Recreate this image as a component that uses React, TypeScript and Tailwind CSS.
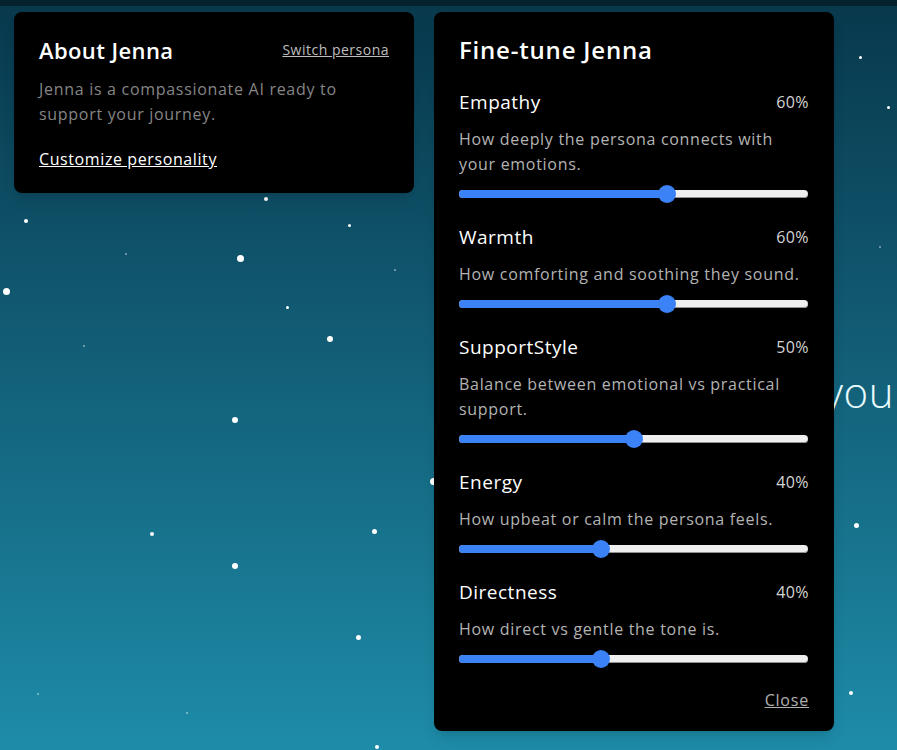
import React from "react";

type Trait = { name: string; value: number; desc: string };

const traits: Trait[] = [
  { name: "Empathy", value: 60, desc: "How deeply the persona connects with your emotions." },
  { name: "Warmth", value: 60, desc: "How comforting and soothing they sound." },
  { name: "SupportStyle", value: 50, desc: "Balance between emotional vs practical support." },
  { name: "Energy", value: 40, desc: "How upbeat or calm the persona feels." },
  { name: "Directness", value: 40, desc: "How direct vs gentle the tone is." },
];

// x, y, size
const stars: [number, number, number][] = [
  [266, 199, 4], [26, 221, 4], [349, 225, 3], [240, 258, 7], [6, 291, 7],
  [330, 339, 6], [235, 420, 6], [152, 534, 4], [374, 531, 5], [235, 566, 6],
  [358, 637, 5], [377, 747, 4], [860, 57, 3], [888, 107, 3], [856, 525, 5],
  [851, 693, 4], [433, 481, 7], [287, 307, 3], [126, 254, 2], [84, 346, 2],
  [395, 270, 2], [880, 247, 2], [38, 694, 2], [187, 713, 2],
];

const Slider = ({ value }: { value: number }) => {
  const pos = `calc(9px + (100% - 18px) * ${value / 100})`;
  return (
    <div className="relative h-[18px] w-full">
      <div className="absolute left-0 right-px top-[5px] h-[8px] rounded-full bg-[#efefef] shadow-[inset_0_-1px_0_#8f8f8f]" />
      <div className="absolute left-0 top-[5px] h-[8px] rounded-full bg-[#3b82f6]" style={{ width: pos }} />
      <div
        className="absolute top-0 h-[18px] w-[18px] -translate-x-1/2 rounded-full bg-[#3b82f6]"
        style={{ left: pos }}
      />
    </div>
  );
};

export default function App() {
  return (
    <div className="relative h-[750px] w-full overflow-hidden bg-gradient-to-b from-[#08384c] to-[#1e8ca9] font-['Open_Sans',sans-serif]">
      <div className="h-[6px] bg-[#05222f]" />

      {stars.map(([x, y, s], i) => (
        <span
          key={i}
          className="absolute rounded-full bg-white"
          style={{ left: x - s / 2, top: y - s / 2, width: s, height: s, opacity: s < 3 ? 0.5 : 1 }}
        />
      ))}

      <main className="flex h-[744px] items-center justify-end pr-[3px] pt-[28px]">
        <h1 className="text-[42px] font-light leading-none tracking-[0.5px] text-[#e8fbff]">here for you</h1>
      </main>

      {/* About card */}
      <section className="absolute left-[14px] top-[12px] w-[400px] rounded-lg bg-black px-[25px] pb-[22px] pt-[24px] shadow-lg">
        <div className="flex items-center justify-between">
          <h2 className="text-[22px] font-semibold leading-[28px] tracking-[0.4px] text-white">About Jenna</h2>
          <button className="text-[14px] leading-[20px] tracking-[0.5px] text-[#bdbdbd] underline">Switch persona</button>
        </div>
        <p className="mt-[13px] text-[16px] leading-[25px] tracking-[0.7px] text-[#858585]">
          Jenna is a compassionate AI ready to support your journey.
        </p>
        <button className="mt-[20px] text-[16px] leading-[24px] tracking-[0.6px] text-white underline">
          Customize personality
        </button>
      </section>

      {/* Fine-tune panel */}
      <section className="absolute left-[434px] top-[12px] w-[400px] rounded-lg bg-black px-[25px] pb-[19px] pt-[22px] shadow-lg">
        <h2 className="text-[24px] font-semibold leading-[32px] tracking-[0.8px] text-white">Fine-tune Jenna</h2>
        <div className="mt-[22px] flex flex-col gap-[20px]">
          {traits.map((t) => (
            <div key={t.name}>
              <div className="flex items-center justify-between">
                <span className="text-[19px] font-medium leading-[28px] tracking-[0.5px] text-white">{t.name}</span>
                <span className="text-[16px] leading-[28px] tracking-[0.4px] text-[#d4d4d4]">{t.value}%</span>
              </div>
              <p className="mt-[11px] text-[16px] leading-[25px] tracking-[0.7px] text-[#b3b3b3]">{t.desc}</p>
              <div className="mt-[8px]">
                <Slider value={t.value} />
              </div>
            </div>
          ))}
        </div>
        <div className="mt-[20px] flex justify-end">
          <button className="text-[16px] leading-[24px] tracking-[0.8px] text-[#b0b0b0] underline">Close</button>
        </div>
      </section>
    </div>
  );
}
